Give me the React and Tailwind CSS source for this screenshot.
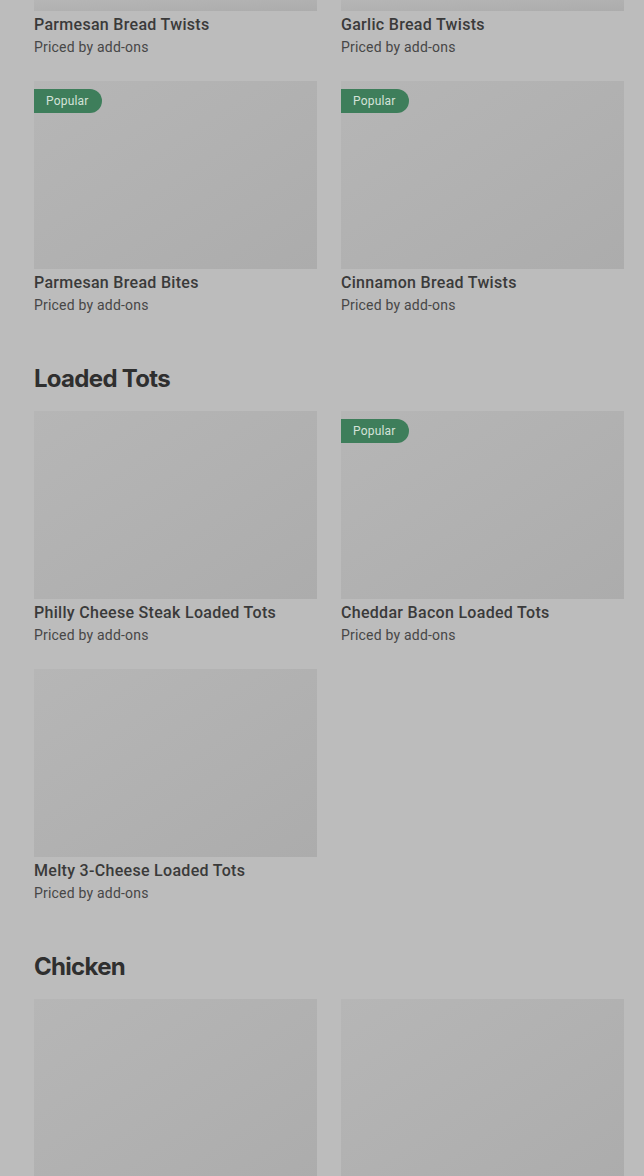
import React from "react";

const body = { fontFamily: "Roboto, 'Noto Sans', sans-serif" };
const head = { fontFamily: "Inter, 'Noto Sans', sans-serif" };

function Card({ title, popular, cropTop, imageOnly }) {
  return (
    <div className="flex flex-col">
      <div
        className={
          "relative w-full bg-gradient-to-br from-[#b6b6b6] via-[#b1b1b1] to-[#acacac] " +
          (cropTop ? "h-[11px]" : "h-[188px]")
        }
      >
        {popular && (
          <div className="absolute left-0 top-[8px] flex h-[24px] items-center rounded-r-full bg-[#3e7e5b] pl-[12px] pr-[13px] text-[12px] tracking-[0.2px] text-[#d4e2d9]">
            Popular
          </div>
        )}
      </div>
      {!imageOnly && (
        <>
          <div className="mt-[3px] text-[16px] font-medium leading-[22px] tracking-[0.3px] text-[#3a3a3a]">{title}</div>
          <div className="text-[14px] leading-[22px] tracking-[0.2px] text-[#474747]">Priced by add-ons</div>
        </>
      )}
    </div>
  );
}

export default function App() {
  return (
    <div className="min-h-[1176px] w-full overflow-hidden bg-[#bcbcbc] pl-[34px] pr-[20px]" style={body}>
      <div className="grid grid-cols-2 gap-x-[24px] gap-y-[23px]">
        <Card title="Parmesan Bread Twists" cropTop />
        <Card title="Garlic Bread Twists" cropTop />
        <Card title="Parmesan Bread Bites" popular />
        <Card title="Cinnamon Bread Twists" popular />
      </div>

      <h2
        className="mt-[47px] mb-[16px] text-[24px] font-bold leading-[32px] tracking-[-0.7px] text-[#2f2f2f]"
        style={head}
      >
        Loaded Tots
      </h2>
      <div className="grid grid-cols-2 gap-x-[24px] gap-y-[23px]">
        <Card title="Philly Cheese Steak Loaded Tots" />
        <Card title="Cheddar Bacon Loaded Tots" popular />
        <Card title="Melty 3-Cheese Loaded Tots" />
      </div>

      <h2
        className="mt-[47px] mb-[16px] text-[24px] font-bold leading-[32px] tracking-[-0.7px] text-[#2f2f2f]"
        style={head}
      >
        Chicken
      </h2>
      <div className="grid grid-cols-2 gap-x-[24px] gap-y-[23px]">
        <Card imageOnly />
        <Card imageOnly />
      </div>
    </div>
  );
}
